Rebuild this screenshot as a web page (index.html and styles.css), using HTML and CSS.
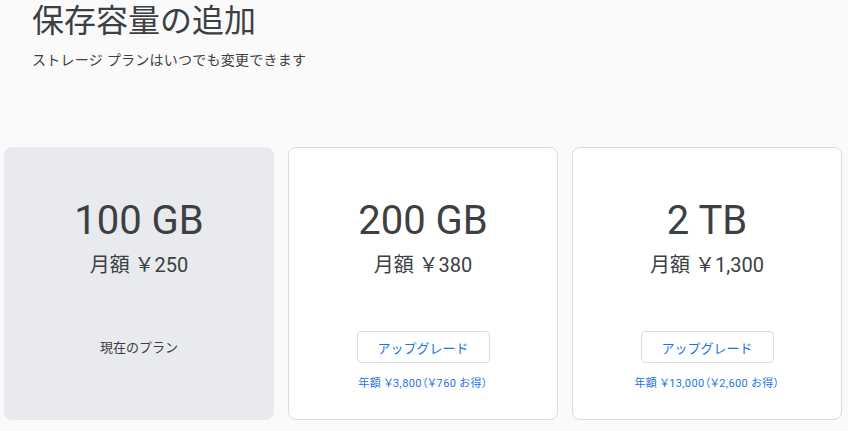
FILE: index.html
```html
<!DOCTYPE html>
<html lang="ja">
  <head>
    <meta charset="UTF-8" />
    <meta name="viewport" content="width=device-width, initial-scale=1.0" />
    <title>保存容量の追加</title>
    <link rel="stylesheet" href="styles.css">
  </head>
  <body>
    <div class="page">
      <div class="header">
        <h1>保存容量の追加</h1>
        <p class="subtitle">ストレージ プランはいつでも変更できます</p>
      </div>

      <div class="plans">
        <div class="plan current">
          <div class="size">100 GB</div>
          <div class="price">月額 ￥250</div>
          <div class="footer">
            <div class="current-label">現在のプラン</div>
          </div>
        </div>

        <div class="plan">
          <div class="size">200 GB</div>
          <div class="price">月額 ￥380</div>
          <div class="footer">
            <button class="upgrade">アップグレード</button>
            <div class="yearly">年額 ￥3,800（￥760 お得）</div>
          </div>
        </div>

        <div class="plan">
          <div class="size">2 TB</div>
          <div class="price">月額 ￥1,300</div>
          <div class="footer">
            <button class="upgrade">アップグレード</button>
            <div class="yearly">年額 ￥13,000（￥2,600 お得）</div>
          </div>
        </div>
      </div>
    </div>
  </body>
</html>
```

FILE: styles.css
```css
body {
  margin: 0;
  background-color: #fafafa;
  font-family: Roboto, "Noto Sans CJK JP", sans-serif;
  color: #3c4043;
}
.page {
  padding: 0 0 0 4px;
}
.header {
  padding: 0 0 0 28px;
  height: 147px;
}
h1 {
  margin: 0;
  padding-top: 1px;
  font-size: 32px;
  font-weight: 400;
  line-height: 40px;
}
.subtitle {
  margin: 9px 0 0;
  font-size: 14px;
  line-height: 20px;
  letter-spacing: 0.25px;
}
.plans {
  display: flex;
  gap: 14px;
}
.plan {
  box-sizing: border-box;
  width: 270px;
  height: 273px;
  padding-top: 49px;
  background-color: #fff;
  border: 1px solid #dadce0;
  border-radius: 8px;
  text-align: center;
}
.plan.current {
  background-color: #e8eaed;
  border-color: #e8eaed;
}
.size {
  font-size: 40px;
  line-height: 48px;
}
.price {
  margin-top: 6px;
  font-size: 20px;
  line-height: 28px;
}
.footer {
  margin-top: 52px;
}
.current-label {
  padding-top: 2px;
  font-size: 13px;
  line-height: 30px;
}
.upgrade {
  width: 133px;
  height: 32px;
  padding: 0;
  background-color: #fff;
  border: 1px solid #dadce0;
  border-radius: 4px;
  color: #1a73e8;
  font-family: inherit;
  font-size: 13px;
  cursor: pointer;
}
.upgrade:hover {
  background-color: #f8fbff;
}
.yearly {
  margin-top: 13px;
  font-size: 11px;
  line-height: 16px;
  letter-spacing: 0.4px;
  color: #1a73e8;
  font-feature-settings: "palt";
}
```
